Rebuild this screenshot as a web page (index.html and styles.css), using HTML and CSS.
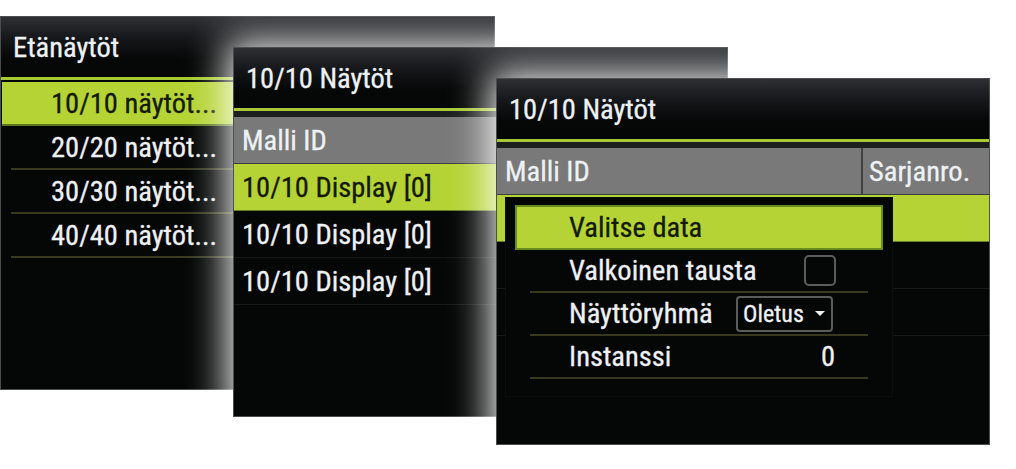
FILE: index.html
```html
<!DOCTYPE html>
<html lang="fi">
<head>
<meta charset="utf-8">
<title>Etänäytöt</title>
<link rel="stylesheet" href="styles.css">
</head>
<body>
<div class="desk">
  <section class="win w1">
    <header class="win-title">Etänäytöt</header>
    <ul class="menu">
      <li class="sel">10/10 näytöt...</li>
      <li>20/20 näytöt...</li>
      <li>30/30 näytöt...</li>
      <li>40/40 näytöt...</li>
    </ul>
  </section>

  <section class="win w2">
    <header class="win-title">10/10 Näytöt</header>
    <div class="table">
      <div class="thead"><span class="cell">Malli ID</span></div>
      <div class="row sel"><span class="cell">10/10 Display [0]</span></div>
      <div class="row"><span class="cell">10/10 Display [0]</span></div>
      <div class="row"><span class="cell">10/10 Display [0]</span></div>
    </div>
  </section>

  <section class="win w3">
    <header class="win-title">10/10 Näytöt</header>
    <div class="table">
      <div class="thead two"><span class="cell first">Malli ID</span><span class="cell">Sarjanro.</span></div>
      <div class="row two sel"><span class="cell first"></span><span class="cell"></span></div>
      <div class="row two"><span class="cell first"></span><span class="cell"></span></div>
      <div class="row two"><span class="cell first"></span><span class="cell"></span></div>
    </div>

    <div class="popup">
      <div class="p-sel">Valitse data</div>
      <div class="p-row"><span>Valkoinen tausta</span><span class="check"></span></div>
      <div class="p-row"><span>Näyttöryhmä</span><span class="select"><span>Oletus</span><span class="caret"></span></span></div>
      <div class="p-row"><span>Instanssi</span><span class="value">0</span></div>
    </div>
  </section>
</div>
</body>
</html>
```
FILE: styles.css
```css
html, body {
  margin: 0;
  background: #ffffff;
}

body {
  font-family: Roboto, "Open Sans", sans-serif;
  font-stretch: 85%;
  font-weight: 400;
  font-size: 28.5px;
  color: #eef1f3;
  -webkit-text-stroke: 0.3px currentColor;
}

.desk {
  position: relative;
  width: 1016px;
  height: 469px;
  overflow: hidden;
}

/* windows on the desktop */
.win {
  position: absolute;
  box-sizing: border-box;
  display: flex;
  flex-direction: column;
  background: #050606;
  border: 1px solid #4c4d4e;
  box-shadow: 0 0 36px 6px rgba(255, 255, 255, 0.95);
}

.w1 { left: 0; top: 16px; width: 495px; height: 374px; z-index: 1; box-shadow: none; }
.w2 { left: 233px; top: 47px; width: 495px; height: 370px; z-index: 2; }
.w3 { left: 496px; top: 78px; width: 494px; height: 367px; z-index: 3; }

.win-title {
  flex: none;
  height: 60px;
  display: flex;
  align-items: center;
  padding-left: 12px;
  background: linear-gradient(#2e3034 0%, #15171a 35%, #060707 70%, #050606 100%);
  border-bottom: 3px solid #a8c934;
  white-space: nowrap;
}

/* first window: plain menu */
.menu {
  list-style: none;
  margin: 0;
  padding: 2px 0 0;
}

.menu li {
  height: 42px;
  display: flex;
  align-items: center;
  margin-left: 10px;
  padding-left: 40px;
  border-bottom: 2px solid #393a1f;
  white-space: nowrap;
}

.menu li.sel {
  margin-left: 1px;
  padding-left: 49px;
  background: #b5d334;
  color: #141905;
  border-bottom-color: #5f7522;
}

/* tables */
.table {
  padding-top: 6px;
  background: linear-gradient(#1d1e1e 0, #1d1e1e 6px, transparent 6px);
}

.thead {
  height: 46px;
  display: flex;
  align-items: center;
  background: #797979;
  border-bottom: 1px solid #3c3d3d;
  white-space: nowrap;
}

.row {
  height: 46px;
  display: flex;
  align-items: center;
  border-bottom: 1px solid #171818;
  white-space: nowrap;
}

.row.sel {
  background: #b5d334;
  color: #141905;
  border-bottom-color: #66802a;
}

.cell {
  padding-left: 8px;
}

.two {
  display: grid;
  grid-template-columns: 366px 1fr;
  align-items: stretch;
}

.two .cell {
  display: flex;
  align-items: center;
  padding-left: 6px;
}

.two .cell.first {
  padding-left: 8px;
}

.thead.two .cell.first {
  border-right: 2px solid #3f4040;
}

/* popup menu over the third window */
.popup {
  position: absolute;
  left: 8px;
  top: 118px;
  width: 388px;
  height: 200px;
  box-sizing: border-box;
  padding: 7px 9px 0;
  background: #050606;
  border: 1px solid #0c0d0d;
  z-index: 5;
}

.p-sel {
  height: 41px;
  display: flex;
  align-items: center;
  padding-left: 52px;
  background: #b5d334;
  color: #141905;
  border: 2px solid #6a8a1f;
}

.p-row {
  height: 41px;
  display: flex;
  align-items: center;
  justify-content: space-between;
  margin: 0 15px;
  padding: 0 32px 0 39px;
  border-bottom: 2px solid #37381d;
  white-space: nowrap;
}

.check {
  width: 28px;
  height: 27px;
  border: 2px solid #5b5c5c;
  border-radius: 5px;
}

.select {
  width: 82px;
  height: 32px;
  margin-right: 3px;
  display: flex;
  align-items: center;
  justify-content: space-between;
  padding: 0 6px 0 5px;
  border: 2px solid #5b5c5c;
  border-radius: 4px;
  font-size: 24px;
}

.caret {
  width: 0;
  height: 0;
  border-left: 5px solid transparent;
  border-right: 5px solid transparent;
  border-top: 5px solid #eef1f3;
}

.value {
  padding-right: 1px;
}
```
